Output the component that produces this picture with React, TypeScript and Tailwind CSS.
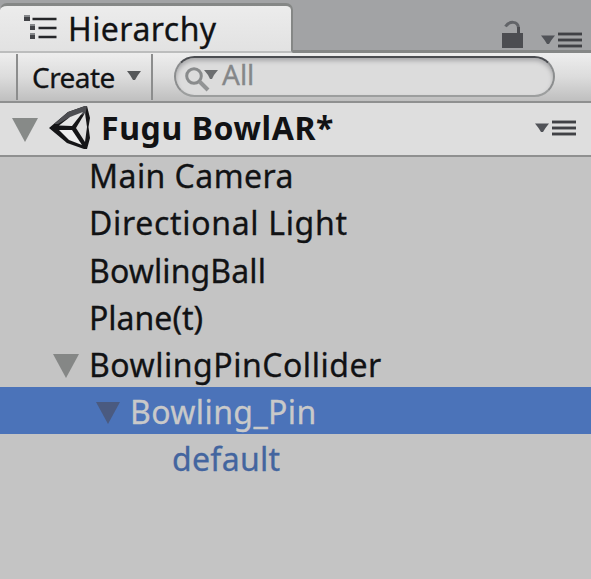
import React from 'react';

const rows = [
  { name: 'Main Camera', pad: 'pl-[89px]', arrow: false, track: 'tracking-[0.45px]' },
  { name: 'Directional Light', pad: 'pl-[89px]', arrow: false, track: 'tracking-[0.68px]' },
  { name: 'BowlingBall', pad: 'pl-[89px]', arrow: false, track: 'tracking-[0.1px]' },
  { name: 'Plane(t)', pad: 'pl-[89px]', arrow: false, track: 'tracking-[0px]' },
  { name: 'BowlingPinCollider', pad: 'pl-[53px]', arrow: true, track: 'tracking-[0.52px]' },
];

function Fold({ className }: { className: string }) {
  return (
    <svg className={className} viewBox="0 0 26 24" preserveAspectRatio="none" fill="currentColor">
      <path d="M0 0H26L13 24Z" />
    </svg>
  );
}

function MenuIcon({ className }: { className: string }) {
  return (
    <svg className={className} width="43" height="17" viewBox="0 0 43 17" fill="none">
      <path d="M1 3.5H15L11.5 8L9 12H7L4.5 8Z" fill="#515358" />
      <path d="M18 2H42M18 8H42M18 14H42" stroke="#505255" strokeWidth="3" />
      <path d="M18 2H42M18 8H42M18 14H42" stroke="#303136" strokeWidth="1" />
    </svg>
  );
}

export default function App() {
  return (
    <div className="flex h-[579px] w-[591px] flex-col overflow-hidden bg-[#c4c4c4] font-['Noto_Sans','Open_Sans',sans-serif] text-[#111214] [-webkit-text-stroke:0.3px_currentColor]">
      <div className="flex h-[53px] shrink-0 justify-between border-b-[3px] border-[#858786] bg-[#a2a3a5] pt-[3px]">
        <div className="-mb-[3px] flex h-[50px] w-[293px] rounded-t-[7px] border-t-[3px] border-r-[2px] border-b-2 border-[#858786] border-b-[#bcbdbd] bg-gradient-to-b from-[#ececec] to-[#e2e2e2]">
          <svg className="mt-[8px] ml-[23px] shrink-0" width="35" height="27" viewBox="0 0 35 27">
            <path d="M1 1H7V7H1ZM7 10H12V16H7ZM7 19H12V25H7Z" fill="#424347" />
            <path d="M1 1H7V3H1ZM7 10H12V12H7ZM7 19H12V21H7Z" fill="#85878a" />
            <path d="M9.5 5H33.5M15.5 14H33.5M15.5 23H33.5" stroke="#252629" strokeWidth="2.6" />
          </svg>
          <span className="ml-[10px] text-[32px] leading-[46px] tracking-[0.45px] whitespace-pre">Hierarchy</span>
        </div>
        <div className="flex">
          <svg className="mt-[17px]" width="23" height="30" viewBox="0 0 23 30" fill="none">
            <path d="M4.5 6.5C8 1 17 .5 17.5 8V15" stroke="#626468" strokeWidth="3" />
            <path d="M17.5 7V15" stroke="#4c4d51" strokeWidth="3" />
            <path d="M1 13H22V28H1Z" fill="#4c4d51" />
          </svg>
          <MenuIcon className="mt-[29px] mr-[8px] ml-[16px]" />
        </div>
      </div>
      <div className="flex h-[50px] shrink-0 border-b-[2px] border-[#8f9090] bg-gradient-to-b from-[#eeeeee] via-[#dcdcdc] to-[#bfbfbf]">
        <div className="mr-[15px] h-[46px] w-px" />
        <div className="mt-px h-[46px] w-[2px] shrink-0 bg-[#8c8d8d]" />
        <div className="flex w-[133px] shrink-0">
          <span className="ml-[14px] text-[28px] leading-[49px] tracking-[-0.55px]">Create</span>
          <svg className="mt-[18px] ml-auto mr-[10px]" width="14" height="9" viewBox="0 0 14 9">
            <path d="M0 0H14L11 4L8 9H6L3 4Z" fill="#56585a" />
          </svg>
        </div>
        <div className="mt-px h-[46px] w-[2px] shrink-0 bg-[#8c8d8d]" />
        <div className="mt-[3px] ml-[21px] flex h-[41px] w-[381px] shrink-0 rounded-full border-2 border-x-[#8b8d8e] border-t-[#4b4d51] border-b-[#9c9e9e] bg-[#dcdcdc] shadow-[inset_0_3px_4px_#aaaaac]">
          <svg className="mt-[9px] ml-[9px] shrink-0" width="35" height="26" viewBox="0 0 35 26" fill="none">
            <circle cx="9" cy="9" r="7.3" stroke="#898b8c" strokeWidth="3" />
            <path d="M14.5 14.5L23 23" stroke="#929495" strokeWidth="4" />
            <path d="M19 3H33L29 8L27 12H25L23 8Z" fill="#6c6e70" />
          </svg>
          <span className="ml-[2px] text-[28px] leading-[33px] text-[#858789]">All</span>
        </div>
      </div>
      <div className="flex h-[54px] shrink-0 border-b-[2px] border-[#8f9090] bg-[#dedede]">
        <Fold className="mt-[15px] ml-[12px] h-[24px] w-[26px] shrink-0 text-[#878a88]" />
        <svg className="mt-[2px] ml-[11px] shrink-0" width="42" height="45" viewBox="0 0 42 45">
          <path d="M0 23L19 7L36 1H38L41 13L39.5 22L41 33L38 44H35L18 38Z" fill="#151517" />
          <path d="M19 7L36 1H38L36.5 9L21 12L9 19L5 19Z" fill="#4d4e52" />
          <path d="M10 20.5L21 12L34 7L23 21Z" fill="#e6e6e6" />
          <path d="M10 25H23L33 40L20 35Z" fill="#eeeeee" />
          <path d="M27 23L36 8L38 22L36 37Z" fill="#dedede" />
        </svg>
        <span className="ml-[10px] text-[32px] leading-[50px] font-bold tracking-[0.6px] whitespace-pre [-webkit-text-stroke:0px]">Fugu BowlAR*</span>
        <MenuIcon className="mt-[17px] mr-[14px] ml-auto" />
      </div>
      <div className="flex flex-col">
        {rows.map((r, i) => (
          <div key={r.name} className={`flex shrink-0 items-end ${i === 0 ? 'h-[41px]' : 'h-[47.25px]'} ${r.pad}`}>
            {r.arrow && <Fold className="mr-[10px] mb-[9px] h-[24px] w-[26px] text-[#858786]" />}
            <span className={`text-[32px] leading-[45px] whitespace-pre ${r.track}`}>{r.name}</span>
          </div>
        ))}
        <div className="flex h-[47px] items-end bg-[#4b73b9] pl-[96px] text-[#c9c9c9]">
          <Fold className="mr-[10px] mb-[10px] h-[22px] w-[24px] text-[#4a5a80]" />
          <span className="text-[32px] leading-[45px] tracking-[0.4px]">Bowling_Pin</span>
        </div>
        <div className="flex h-[47px] items-end pl-[172px] text-[#43659f]">
          <span className="text-[32px] leading-[45px] tracking-[0.3px]">default</span>
        </div>
      </div>
    </div>
  );
}
